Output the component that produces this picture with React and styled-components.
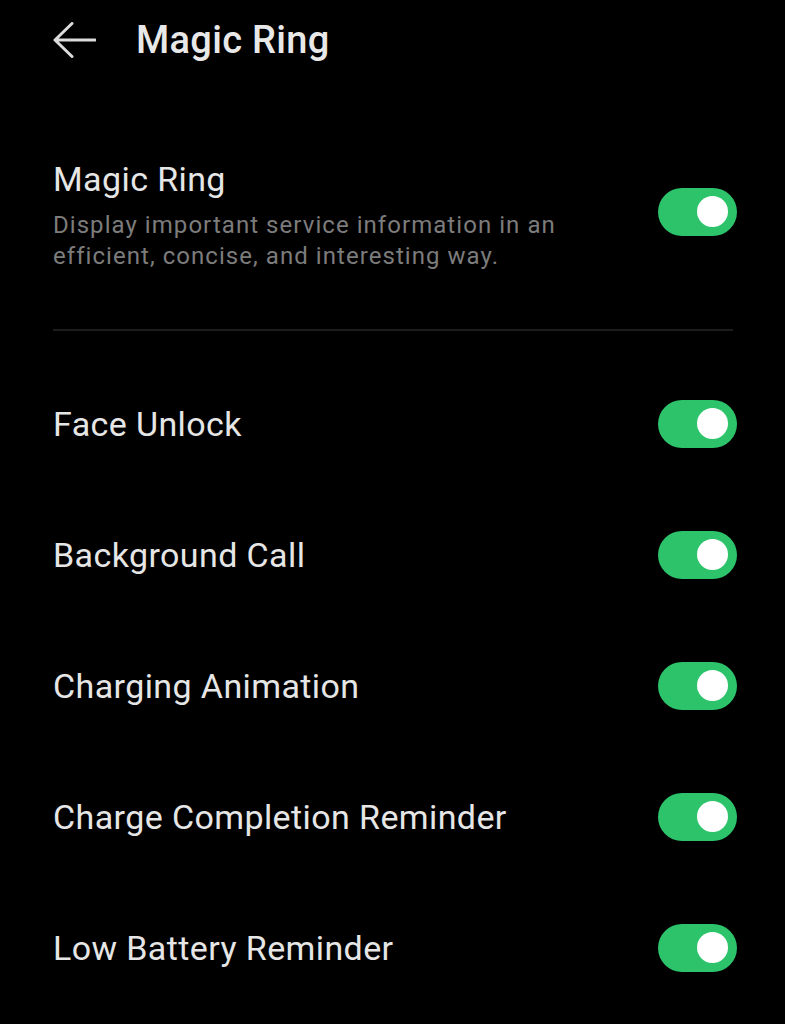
import React, { useState } from "react";
import styled, { createGlobalStyle } from "styled-components";

const GlobalStyle = createGlobalStyle`
  html, body {
    margin: 0;
    padding: 0;
    background: #000;
  }
  body {
    font-family: Roboto, "Noto Sans", sans-serif;
    -webkit-font-smoothing: antialiased;
  }
`;

const Page = styled.div`
  width: 785px;
  min-height: 1024px;
  background: #000;
  box-sizing: border-box;
  padding: 0 48px 0 53px;
`;

const Header = styled.header`
  display: flex;
  align-items: center;
  height: 80px;
  gap: 40px;
`;

const BackBtn = styled.button`
  background: none;
  border: none;
  padding: 0;
  width: 43px;
  height: 36px;
  display: flex;
  align-items: center;
  cursor: pointer;
`;

const Title = styled.h1`
  margin: 0;
  font-size: 38px;
  font-weight: 500;
  color: #e8e8e8;
  letter-spacing: 0.3px;
`;

const Row = styled.div`
  display: flex;
  align-items: center;
  justify-content: space-between;
  height: ${(p) => p.$h || 131}px;
  padding-top: ${(p) => p.$top || 0}px;
`;

const TextCol = styled.div`
  display: flex;
  flex-direction: column;
  gap: 12px;
  margin-top: 8px;
`;

const Label = styled.div`
  font-size: 34px;
  color: #e6e6e6;
  line-height: 38px;
  letter-spacing: 0.4px;
`;

const Desc = styled.div`
  font-size: 24px;
  color: #7c7c7c;
  line-height: 31px;
  letter-spacing: 1.05px;
  max-width: 540px;
`;

const Divider = styled.hr`
  border: none;
  height: 2px;
  background: #1c1c1c;
  margin: 0 4px 27px 0;
`;

const Track = styled.button`
  position: relative;
  flex-shrink: 0;
  width: 79px;
  height: 48px;
  border-radius: 24px;
  border: none;
  padding: 0;
  background: ${(p) => (p.$on ? "#2cc36b" : "#444")};
  cursor: pointer;
`;

const Knob = styled.span`
  position: absolute;
  top: 8.5px;
  left: ${(p) => (p.$on ? "39px" : "9px")};
  width: 31px;
  height: 31px;
  border-radius: 50%;
  background: #fff;
`;

const Toggle = ({ on, onClick }) => (
  <Track $on={on} onClick={onClick}>
    <Knob $on={on} />
  </Track>
);

const items = [
  "Face Unlock",
  "Background Call",
  "Charging Animation",
  "Charge Completion Reminder",
  "Low Battery Reminder",
];

export default function App() {
  const [main, setMain] = useState(true);
  const [flags, setFlags] = useState(items.map(() => true));

  return (
    <>
      <GlobalStyle />
      <Page>
        <Header>
          <BackBtn aria-label="back">
            <svg width="43" height="36" viewBox="0 0 43 36" fill="none">
              <path
                d="M42 18H2M19 1.5L2 18l17 16.5"
                stroke="#dcdcdc"
                strokeWidth="3"
                strokeLinecap="round"
                strokeLinejoin="round"
              />
            </svg>
          </BackBtn>
          <Title>Magic Ring</Title>
        </Header>

        <Row $h={235} $top={14}>
          <TextCol>
            <Label>Magic Ring</Label>
            <Desc>
              Display important service information in an efficient, concise,
              and interesting way.
            </Desc>
          </TextCol>
          <Toggle on={main} onClick={() => setMain(!main)} />
        </Row>

        <Divider />

        {items.map((name, i) => (
          <Row key={name}>
            <Label>{name}</Label>
            <Toggle
              on={flags[i]}
              onClick={() =>
                setFlags(flags.map((f, j) => (j === i ? !f : f)))
              }
            />
          </Row>
        ))}
      </Page>
    </>
  );
}
